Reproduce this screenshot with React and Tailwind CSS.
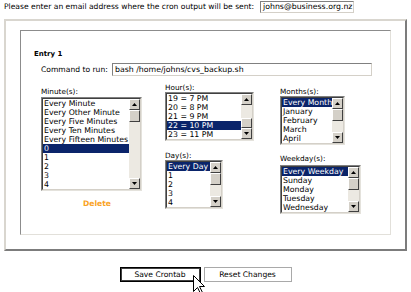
import React from "react";

const minutes = ["Every Minute", "Every Other Minute", "Every Five Minutes", "Every Ten Minutes", "Every Fifteen Minutes", "0", "1", "2", "3", "4"];
const hours = ["19 = 7 PM", "20 = 8 PM", "21 = 9 PM", "22 = 10 PM", "23 = 11 PM"];
const months = ["Every Month", "January", "February", "March", "April"];
const days = ["Every Day", "1", "2", "3", "4"];
const weekdays = ["Every Weekday", "Sunday", "Monday", "Tuesday", "Wednesday"];

function ScrollButton({ down }) {
  return (
    <div className="w-[11px] h-[11px] shrink-0 bg-[#d4d0c8] border border-t-[#ffffff] border-l-[#ffffff] border-r-[#404040] border-b-[#404040] flex items-center justify-center">
      <svg width="5" height="3" viewBox="0 0 5 3">
        {down ? <path d="M0 0H5L2.5 3Z" fill="#000" /> : <path d="M0 3H5L2.5 0Z" fill="#000" />}
      </svg>
    </div>
  );
}

function Thumb({ h }) {
  return <div className={"w-[11px] shrink-0 bg-[#d4d0c8] border border-t-[#ffffff] border-l-[#ffffff] border-r-[#404040] border-b-[#404040] " + h} />;
}

function Listbox({ width, items, sel, thumbAtBottom }) {
  return (
    <div className={"border border-t-[#808080] border-l-[#808080] border-r-[#e4e2dc] border-b-[#e4e2dc] bg-white " + width}>
      <div className="flex border border-t-[#404040] border-l-[#404040] border-r-[#d4d0c8] border-b-[#d4d0c8]">
        <div className="flex-1 min-w-0">
          {items.map((it, i) => (
            <div
              key={i}
              className={"h-[9px] leading-[9px] pl-[1px] text-[7.8px] whitespace-nowrap overflow-hidden " + (i === sel ? "bg-[#0a246a] text-white" : "text-black")}
            >
              {it}
            </div>
          ))}
        </div>
        <div className="w-[11px] flex flex-col bg-[#ece9e2]">
          <ScrollButton />
          {thumbAtBottom ? (
            <>
              <div className="flex-1" />
              <Thumb h="h-[10px]" />
            </>
          ) : (
            <>
              <Thumb h="h-[12px]" />
              <div className="flex-1" />
            </>
          )}
          <ScrollButton down />
        </div>
      </div>
    </div>
  );
}

function Label({ children, className = "" }) {
  return <div className={"text-[7.3px] leading-[8px] h-[8px] text-black whitespace-nowrap " + className}>{children}</div>;
}

export default function App() {
  return (
    <div className="relative w-[411px] h-[292px] bg-white overflow-hidden font-['DejaVu_Sans',sans-serif] text-black">
      <div className="flex items-center h-[13px] pl-[4px] pt-[1px]">
        <span className="text-[7.6px] leading-[8px] w-[256px] whitespace-nowrap">Please enter an email address where the cron output will be sent:</span>
        <div className="w-[94px] h-[12px] border border-t-[#808080] border-l-[#808080] border-r-[#d4d0c8] border-b-[#d4d0c8] text-[7.8px] leading-[10px] pl-[2px] whitespace-nowrap overflow-hidden">
          johns@business.org.nz
        </div>
      </div>

      <div className="ml-[4px] mt-[6px] w-[403px] h-[232px] border-2 border-t-[#d9d6cf] border-l-[#d9d6cf] border-r-[#7c7c7c] border-b-[#7c7c7c]">
        <div className="ml-[14px] mt-[9px] w-[371px] h-[205px] border border-t-[#8c8c8c] border-l-[#8c8c8c] border-r-[#e2e0da] border-b-[#e2e0da]">
          <div className="ml-[13px] mt-[19px] text-[7px] leading-[8px] font-bold">Entry 1</div>

          <div className="flex items-center ml-[20px] mt-[5px] h-[13px]">
            <span className="text-[7.6px] leading-[8px] w-[71px] whitespace-nowrap">Command to run:</span>
            <div className="w-[260px] h-[13px] border border-t-[#808080] border-l-[#808080] border-r-[#d4d0c8] border-b-[#d4d0c8] text-[7.8px] leading-[11px] pl-[2px] whitespace-nowrap">
              bash /home/johns/cvs_backup.sh
            </div>
          </div>

          <div className="flex items-start ml-[20px]">
            <div className="flex flex-col w-[101px] mt-[12px]">
              <Label className="mb-[1px]">Minute(s):</Label>
              <Listbox width="w-[101px]" items={minutes} sel={5} />
              <div className="mt-[9px] pl-[42px] text-[7.6px] leading-[8px] font-bold text-[#f9a21f]">Delete</div>
            </div>

            <div className="flex flex-col w-[89px] ml-[23px] mt-[8px]">
              <Label>Hour(s):</Label>
              <Listbox width="w-[89px]" items={hours} sel={3} thumbAtBottom />
              <Label className="mt-[11px]">Day(s):</Label>
              <Listbox width="w-[58px]" items={days} sel={0} />
            </div>

            <div className="flex flex-col ml-[26px] mt-[12px]">
              <Label>Months(s):</Label>
              <Listbox width="w-[65px]" items={months} sel={0} />
              <Label className="mt-[10px] mb-[2px]">Weekday(s):</Label>
              <Listbox width="w-[81px]" items={weekdays} sel={0} />
            </div>
          </div>
        </div>
      </div>

      <div className="flex justify-center gap-[3px] mt-[16px]">
        <button className="w-[81px] h-[15px] border border-black outline outline-1 outline-offset-[-2px] outline-[#404040] bg-white text-[7.6px] leading-[13px]">Save Crontab</button>
        <button className="w-[88px] h-[15px] border border-[#a9a9a9] bg-white text-[7.6px] leading-[13px]">Reset Changes</button>
      </div>

      <svg className="absolute left-[193px] top-[275px]" width="13" height="20" viewBox="0 0 13 20">
        <path d="M0.5 0.5V16.5L4.5 12.5L7.5 18.5L9.5 17.5L6.5 11.5H11.5Z" fill="#fff" stroke="#000" strokeWidth="1" />
      </svg>
    </div>
  );
}
